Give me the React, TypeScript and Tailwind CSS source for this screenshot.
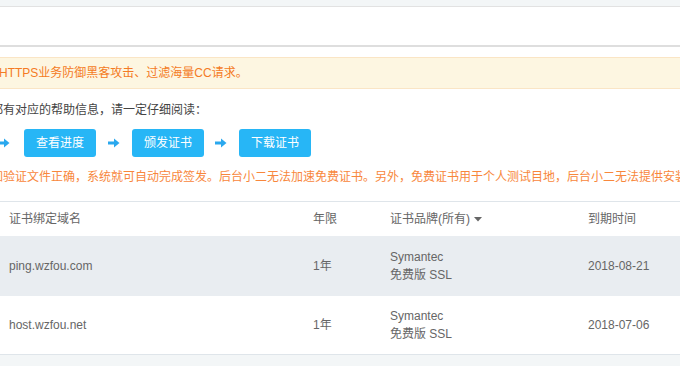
const font = { fontFamily: '"Liberation Sans", "Noto Sans CJK SC", sans-serif' };

function Arrow() {
  return (
    <svg width="12" height="10" viewBox="0 0 12 10" className="shrink-0">
      <rect x="0" y="3.5" width="7" height="3" fill="#2aa8ee" />
      <path d="M6 0.5 L11.5 5 L6 9.5 Z" fill="#2aa8ee" />
    </svg>
  );
}

function StepButton({ label }: { label: string }) {
  return (
    <div className="w-[72px] h-[28px] rounded-[3px] bg-[#27b6f6] text-white text-[12px] flex items-center justify-center">
      {label}
    </div>
  );
}

const rows = [
  { domain: 'ping.wzfou.com', years: '1年', date: '2018-08-21', shaded: true },
  { domain: 'host.wzfou.net', years: '1年', date: '2018-07-06', shaded: false },
];

export default function App() {
  return (
    <div className="w-[680px] h-[366px] overflow-hidden bg-white text-[12px]" style={font}>
      <div className="h-[7px] bg-[#f3f6f7] border-b border-[#e2e2e2]" />
      <div className="h-[40px] border-b-2 border-[#dedede]" />

      <div className="mt-[10px] h-[32px] bg-[#fdf6e1] border-y border-[#fae5c5] flex items-center text-[#f47b24]">
        <span className="whitespace-nowrap -ml-px">HTTPS业务防御黑客攻击、过滤海量CC请求。</span>
      </div>

      <div className="mt-[12px] whitespace-nowrap text-[#444] -ml-[9px]">都有对应的帮助信息，请一定仔细阅读：</div>

      <div className="mt-[10px] flex items-center -ml-[2px]">
        <Arrow />
        <div className="ml-[14px]"><StepButton label="查看进度" /></div>
        <div className="ml-[12px]"><Arrow /></div>
        <div className="ml-[12px]"><StepButton label="颁发证书" /></div>
        <div className="ml-[11px]"><Arrow /></div>
        <div className="ml-[12px]"><StepButton label="下载证书" /></div>
      </div>

      <div className="mt-[11px] whitespace-nowrap text-[#f8873c] -ml-[9px]">
        如验证文件正确，系统就可自动完成签发。后台小二无法加速免费证书。另外，免费证书用于个人测试目地，后台小二无法提供安装支持。
      </div>

      <div className="mt-[15px] border-t border-[#dfe5ea] text-[#666]">
        <div className="grid grid-cols-[304px_77px_198px_1fr] h-[34px] items-center">
          <div className="pl-[9px]">证书绑定域名</div>
          <div className="pl-[9px]">年限</div>
          <div className="pl-[9px] flex items-center gap-[4px]">
            证书品牌(所有)
            <svg width="8" height="5" viewBox="0 0 8 5"><path d="M0 0 L8 0 L4 4.5 Z" fill="#666" /></svg>
          </div>
          <div className="pl-[9px]">到期时间</div>
        </div>
        {rows.map((r) => (
          <div
            key={r.domain}
            className={`grid grid-cols-[304px_77px_198px_1fr] items-center ${r.shaded ? 'h-[60px] bg-[#e9edf1]' : 'h-[58px] bg-white'}`}
          >
            <div className="pl-[9px]">{r.domain}</div>
            <div className="pl-[9px]">{r.years}</div>
            <div className="pl-[9px] leading-[18px]">
              <div>Symantec</div>
              <div>免费版 SSL</div>
            </div>
            <div className="pl-[9px]">{r.date}</div>
          </div>
        ))}
        <div className="h-[20px] border-t border-[#dfe5ea] bg-[#f3f6f7]" />
      </div>
    </div>
  );
}
